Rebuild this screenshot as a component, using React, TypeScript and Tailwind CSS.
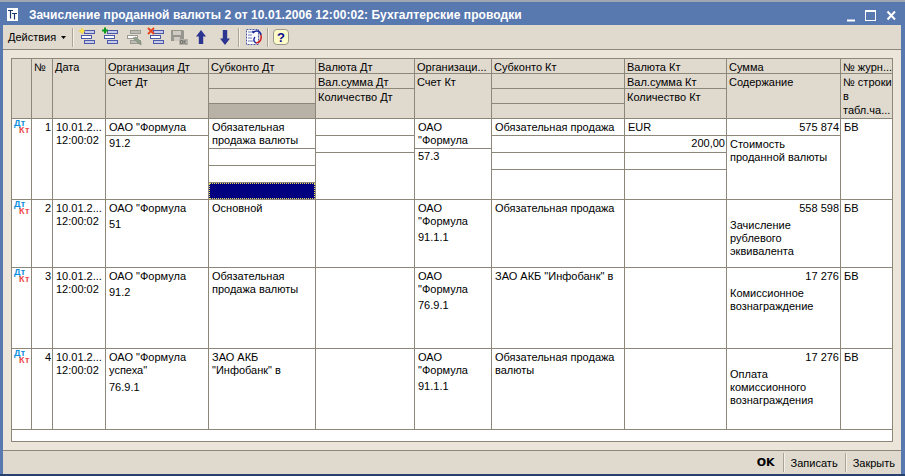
import React from "react";

const Bars = ({ c = "#4a5aa8", f = "#c8cce8" }: { c?: string; f?: string }) => (
  <>
    <rect x="6.5" y="3.5" width="10" height="3" fill={f} stroke={c} strokeWidth="1" />
    <rect x="3.5" y="8.5" width="10" height="3" fill="#fff" stroke={c} strokeWidth="1" />
    <rect x="6.5" y="13.5" width="10" height="3" fill={f} stroke={c} strokeWidth="1" />
  </>
);

const Tool = ({ children, w = 18 }: { children: React.ReactNode; w?: number }) => (
  <svg width={w} height="20" viewBox={`0 0 ${w} 20`} className="block shrink-0">
    {children}
  </svg>
);

const Sep = () => <div className="w-[2px] h-[19px] border-l border-[#aaa498] bg-[#f4f0e8]" />;

const Toolbar = () => (
  <div className="h-[24px] flex items-center bg-[#dfd9ce] pl-[2px]">
    <span className="text-[11px] leading-[14px] text-black px-[3px] w-[55px] whitespace-nowrap">Действия</span>
    <svg width="5" height="3" viewBox="0 0 5 3" className="ml-[1px] mr-[6px]"><path d="M0 0h5L2.5 3z" fill="#000" /></svg>
    <Sep />
    <div className="flex items-center ml-[4px] gap-[5px]">
      <Tool>
        <Bars />
        <path d="M4 1l1 2 2 1-2 1-1 2-1-2-2-1 2-1z" fill="#ffe94a" stroke="#f0c820" strokeWidth="0.5" />
      </Tool>
      <Tool>
        <Bars />
        <path d="M4 0.5v6M1 3.5h6" stroke="#0a9a20" strokeWidth="2" />
      </Tool>
      <Tool>
        <Bars c="#9a9a94" f="#bdbdb6" />
        <path d="M9 11l5 5 3 2 0-3-5-5z" fill="#8aa08a" stroke="#8a8a80" strokeWidth="0.7" />
      </Tool>
      <Tool>
        <Bars />
        <path d="M1 1l6 6M7 1l-6 6" stroke="#e8401c" strokeWidth="1.8" />
      </Tool>
      <Tool>
        <path d="M1 3h12l1 1v10H1z" fill="#97968e" />
        <rect x="3" y="4" width="8" height="4" fill="#cfcbc2" />
        <rect x="4" y="10" width="6" height="4" fill="#cfcbc2" />
        <rect x="9" y="12" width="9" height="6" fill="#b4b1a9" />
        <path d="M10.5 13.5h2v3h-2zM14 13v4M16.5 13l-2.5 2 2.5 2" fill="none" stroke="#77766e" strokeWidth="1" />
      </Tool>
      <div className="flex items-center ml-[3px] gap-[14px]">
        <Tool w={10}>
          <path d="M5 3l5 6.5H7.2V17H2.8V9.5H0z" fill="#2c3590" />
        </Tool>
        <Tool w={10}>
          <path d="M5 18l5-6.5H7.2V3H2.8v8.5H0z" fill="#2c3590" />
        </Tool>
      </div>
    </div>
    <div className="ml-[8px]"><Sep /></div>
    <div className="ml-[5px] mr-[4px]">
      <Tool>
        <rect x="1.5" y="2.5" width="12" height="15" fill="#fff" stroke="#4a5aa8" strokeDasharray="2 1" />
        <path d="M3 5h6M3 8h4M3 11h4M3 14h6" stroke="#6c78b8" strokeWidth="1" />
        <path d="M8 6c2-3 7-3 8 2" fill="none" stroke="#1a2a9a" strokeWidth="1.6" />
        <path d="M8 6.5l-1-3 3 1z" fill="#1a2a9a" />
        <path d="M16 8c1 4-1 8-5 8" fill="none" stroke="#d02020" strokeWidth="1.5" />
        <path d="M10 10c-2 2-1 5 1 6" fill="none" stroke="#1a2a9a" strokeWidth="1.4" />
      </Tool>
    </div>
    <Sep />
    <div className="ml-[3px]">
      <Tool>
        <rect x="1.5" y="2.5" width="15" height="15" rx="3.5" fill="#fdfbc8" stroke="#9a988c" />
        <text x="9" y="15" textAnchor="middle" fontSize="13" fontWeight="700" fill="#0a0a90" fontFamily="'Liberation Sans', sans-serif">?</text>
      </Tool>
    </div>
  </div>
);

const Hc = ({ t, last, dark }: { t?: string; last?: boolean; dark?: boolean }) => (
  <div className={`${last ? "flex-1" : "h-[15px] border-b border-[#8c8778]"} ${dark ? "bg-[#b8b1a6]" : "bg-[#dfd9ce]"} pl-[2px] text-[11px] leading-[14px] pt-[1px] whitespace-pre overflow-hidden`}>
    {t}
  </div>
);

const Header = () => (
  <div className="flex h-[60px] border-b border-[#8c8778] bg-[#dfd9ce] shrink-0">
    <div className="w-[20px] border-r border-[#8c8778]" />
    <div className="w-[21px] border-r border-[#8c8778]"><Hc t="№" last /></div>
    <div className="w-[53px] border-r border-[#8c8778] flex flex-col"><Hc t="Дата" last /></div>
    <div className="w-[103px] border-r border-[#8c8778] flex flex-col"><Hc t="Организация Дт" /><Hc t="Счет Дт" last /></div>
    <div className="w-[107px] border-r border-[#8c8778] flex flex-col"><Hc t="Субконто Дт" /><Hc /><Hc /><Hc last dark /></div>
    <div className="w-[99px] border-r border-[#8c8778] flex flex-col"><Hc t="Валюта Дт" /><Hc t="Вал.сумма Дт" /><Hc t="Количество Дт" last /></div>
    <div className="w-[77px] border-r border-[#8c8778] flex flex-col"><Hc t="Организаци..." /><Hc t="Счет Кт" last /></div>
    <div className="w-[133px] border-r border-[#8c8778] flex flex-col"><Hc t="Субконто Кт" /><Hc /><Hc /><Hc last /></div>
    <div className="w-[102px] border-r border-[#8c8778] flex flex-col"><Hc t="Валюта Кт" /><Hc t="Вал.сумма Кт" /><Hc t="Количество Кт" last /></div>
    <div className="w-[114px] border-r border-[#8c8778] flex flex-col"><Hc t="Сумма" /><Hc t="Содержание" last /></div>
    <div className="w-[51px] flex flex-col"><Hc t="№ журн..." /><Hc t={"№ строки\nв\nтабл.ча..."} last /></div>
  </div>
);

const Txt = ({ t, pt = "pt-[2px]", h, line, right }: { t?: string; pt?: string; h?: string; line?: boolean; right?: boolean }) => (
  <div className={`${h ?? ""} ${pt} ${line ? "border-b border-[#8c8778]" : ""} ${right ? "text-right pr-[1px]" : "pl-[3px]"} text-[11px] leading-[13px] whitespace-pre-line overflow-hidden shrink-0`}>
    {t}
  </div>
);

const Mark = () => (
  <div className="w-[20px] border-r border-[#8c8778] flex flex-col font-bold text-[9px] leading-[7px] tracking-[0.4px] pt-[1px] pl-[2px] whitespace-nowrap overflow-hidden">
    <span className="h-[7px] text-[#0a8ee0]">Дт</span>
    <span className="h-[7px] text-[#f04848] ml-[5px]">Кт</span>
  </div>
);

type R = {
  n: string; h: string;
  org: React.ReactNode; subD: React.ReactNode; valD: React.ReactNode; orgK: React.ReactNode; subK: React.ReactNode; valK: React.ReactNode; sum: React.ReactNode; j: string;
};

const Row = ({ n, h, org, subD, valD, orgK, subK, valK, sum, j }: R) => (
  <div className={`flex ${h} border-b border-[#8c8778] shrink-0`}>
    <Mark />
    <div className="w-[21px] border-r border-[#8c8778]"><Txt t={n} right /></div>
    <div className="w-[53px] border-r border-[#8c8778] overflow-hidden"><Txt t={"10.01.2...\n12:00:02"} /></div>
    <div className="w-[103px] border-r border-[#8c8778]">{org}</div>
    <div className="w-[107px] border-r border-[#8c8778] flex flex-col">{subD}</div>
    <div className="w-[99px] border-r border-[#8c8778]">{valD}</div>
    <div className="w-[77px] border-r border-[#8c8778]">{orgK}</div>
    <div className="w-[133px] border-r border-[#8c8778]">{subK}</div>
    <div className="w-[102px] border-r border-[#8c8778]">{valK}</div>
    <div className="w-[114px] border-r border-[#8c8778]">{sum}</div>
    <div className="w-[51px]"><Txt t={j} /></div>
  </div>
);

const Blank = ({ h = "h-[17px]" }: { h?: string }) => <div className={`${h} border-b border-[#8c8778]`} />;

const Footer = () => (
  <div className="h-[23px] flex items-center justify-end bg-[#dfd9ce] pr-[6px] text-[11px] leading-[14px]">
    <span className="font-bold text-[11px] mr-[8px]" style={{ fontFamily: "'DejaVu Sans', sans-serif" }}>OK</span>
    <Sep />
    <span className="ml-[6px] mr-[7px]">Записать</span>
    <Sep />
    <span className="ml-[6px]">Закрыть</span>
  </div>
);

export default function App() {
  return (
    <div
      className="w-[905px] h-[476px] flex flex-col bg-[#5878b0] text-black overflow-hidden"
      style={{ fontFamily: "'Liberation Sans', sans-serif" }}
    >
      <div className="h-[25px] flex items-center shrink-0 border-t-[2px] border-[#9fa6b2] pt-[2px] pl-[7px] pr-[9px]">
        <svg width="11" height="13" viewBox="0 0 11 13" className="shrink-0">
          <rect width="11" height="13" fill="#fff" />
          <path d="M1 2.5h5M3.5 2.5v8M5 5.5h5M7.5 5.5v6" stroke="#1c3a6c" strokeWidth="1.2" fill="none" />
        </svg>
        <span className="ml-[11px] text-white font-bold text-[12px] tracking-[0.08px] whitespace-nowrap">
          Зачисление проданной валюты 2 от 10.01.2006 12:00:02: Бухгалтерские проводки
        </span>
        <div className="ml-auto flex items-center">
          <svg width="50" height="14" viewBox="0 0 50 14" className="shrink-0">
            <path d="M1 12.5h8" stroke="#fff" strokeWidth="2" />
            <rect x="19.5" y="2.5" width="10" height="10" fill="none" stroke="#fff" />
            <path d="M19.5 3h10" stroke="#fff" strokeWidth="2" />
            <path d="M41.5 3.5l7.5 8M49 3.5l-7.5 8" stroke="#fff" strokeWidth="2" />
          </svg>
        </div>
      </div>

      <div className="w-[898px] ml-[3px] h-[449px] flex flex-col shrink-0">
        <Toolbar />
        <div className="h-[402px] flex flex-col bg-[#ece6da] border-y border-[#8c8778] pt-[8px] pl-[8px]">
          <div className="w-[882px] h-[384px] border border-[#8c8778] bg-white flex flex-col overflow-hidden">
            <Header />
            <Row
              n="1" h="h-[81px]"
              org={<><Txt t={'ОАО "Формула'} h="h-[17px]" line /><Txt t="91.2" pt="pt-[1px]" /></>}
              subD={<><Txt t={"Обязательная\nпродажа валюты"} h="h-[30px]" line /><Blank /><Blank />
                <div className="flex-1 bg-[#000080] border border-dotted border-[#f4e060]" /></>}
              valD={<><Blank /><Blank /></>}
              orgK={<><Txt t={'ОАО\n"Формула'} h="h-[30px]" line /><Txt t="57.3" pt="pt-[1px]" /></>}
              subK={<><Txt t="Обязательная продажа" h="h-[17px]" line /><Blank /><Blank /></>}
              valK={<><Txt t="EUR" h="h-[17px]" line /><Txt t="200,00" h="h-[17px]" pt="pt-[1px]" line right /><Blank /></>}
              sum={<><Txt t="575 874" h="h-[17px]" line right /><Txt t={"Стоимость\nпроданной валюты"} pt="pt-[2px]" /></>}
              j="БВ"
            />
            <Row
              n="2" h="h-[68px]"
              org={<><Txt t={'ОАО "Формула'} h="h-[16px]" /><Txt t="51" /></>}
              subD={<Txt t="Основной" />}
              orgK={<><Txt t={'ОАО\n"Формула'} h="h-[29px]" /><Txt t="91.1.1" pt="pt-[2px]" /></>}
              subK={<Txt t="Обязательная продажа" />}
              valD={null} valK={null}
              sum={<><Txt t="558 598" h="h-[16px]" right /><Txt t={"Зачисление\nрублевого\nэквивалента"} pt="pt-[3px]" /></>}
              j="БВ"
            />
            <Row
              n="3" h="h-[81px]"
              org={<><Txt t={'ОАО "Формула'} h="h-[16px]" /><Txt t="91.2" /></>}
              subD={<Txt t={"Обязательная\nпродажа валюты"} />}
              orgK={<><Txt t={'ОАО\n"Формула'} h="h-[29px]" /><Txt t="76.9.1" pt="pt-[2px]" /></>}
              subK={<Txt t={'ЗАО АКБ "Инфобанк" в'} />}
              valD={null} valK={null}
              sum={<><Txt t="17 276" h="h-[16px]" right /><Txt t={"Комиссионное\nвознаграждение"} pt="pt-[3px]" /></>}
              j="БВ"
            />
            <Row
              n="4" h="h-[81px]"
              org={<><Txt t={'ОАО "Формула\nуспеха"'} h="h-[29px]" /><Txt t="76.9.1" pt="pt-[3px]" /></>}
              subD={<Txt t={'ЗАО АКБ\n"Инфобанк" в'} />}
              orgK={<><Txt t={'ОАО\n"Формула'} h="h-[29px]" /><Txt t="91.1.1" pt="pt-[2px]" /></>}
              subK={<Txt t={"Обязательная продажа\nвалюты"} />}
              valD={null} valK={null}
              sum={<><Txt t="17 276" h="h-[16px]" right /><Txt t={"Оплата\nкомиссионного\nвознаграждения"} pt="pt-[3px]" /></>}
              j="БВ"
            />
          </div>
        </div>
        <Footer />
      </div>
      <div className="flex-1 bg-[#27406e]" />
    </div>
  );
}
